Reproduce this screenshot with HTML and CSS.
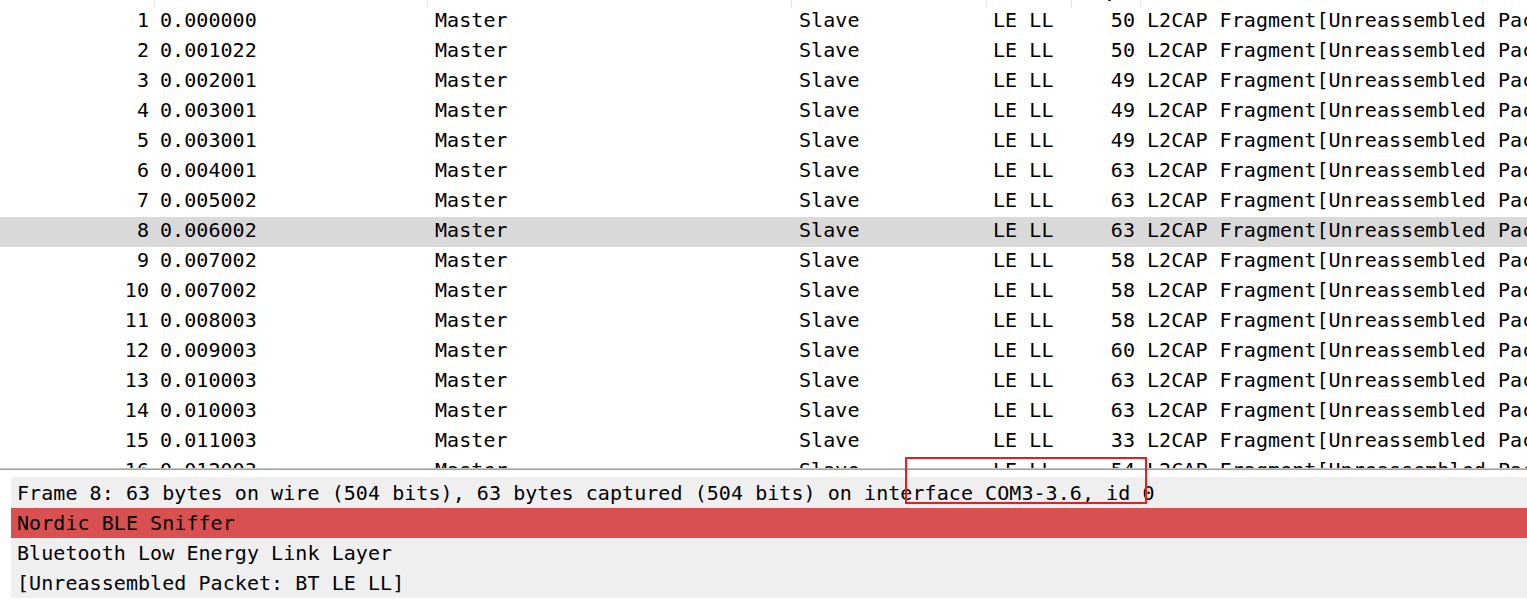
FILE: index.html
```html
<!DOCTYPE html>
<html>
<head>
<meta charset="utf-8">
<link rel="stylesheet" href="styles.css">
</head>
<body>
<div class="app">
  <div class="list">
    <div class="hdr">
      <div class="hc"></div><div class="hc"></div><div class="hc"></div><div class="hc"></div><div class="hc"></div><div class="hc sorted"></div><div class="hc"></div>
    </div>
    <div class="row"><span class="c r">1</span><span class="c t">0.000000</span><span class="c s">Master</span><span class="c s">Slave</span><span class="c">LE LL</span><span class="c r">50</span><span class="c">L2CAP Fragment[Unreassembled Packet: BT LE LL]</span></div>
    <div class="row"><span class="c r">2</span><span class="c t">0.001022</span><span class="c s">Master</span><span class="c s">Slave</span><span class="c">LE LL</span><span class="c r">50</span><span class="c">L2CAP Fragment[Unreassembled Packet: BT LE LL]</span></div>
    <div class="row"><span class="c r">3</span><span class="c t">0.002001</span><span class="c s">Master</span><span class="c s">Slave</span><span class="c">LE LL</span><span class="c r">49</span><span class="c">L2CAP Fragment[Unreassembled Packet: BT LE LL]</span></div>
    <div class="row"><span class="c r">4</span><span class="c t">0.003001</span><span class="c s">Master</span><span class="c s">Slave</span><span class="c">LE LL</span><span class="c r">49</span><span class="c">L2CAP Fragment[Unreassembled Packet: BT LE LL]</span></div>
    <div class="row"><span class="c r">5</span><span class="c t">0.003001</span><span class="c s">Master</span><span class="c s">Slave</span><span class="c">LE LL</span><span class="c r">49</span><span class="c">L2CAP Fragment[Unreassembled Packet: BT LE LL]</span></div>
    <div class="row"><span class="c r">6</span><span class="c t">0.004001</span><span class="c s">Master</span><span class="c s">Slave</span><span class="c">LE LL</span><span class="c r">63</span><span class="c">L2CAP Fragment[Unreassembled Packet: BT LE LL]</span></div>
    <div class="row"><span class="c r">7</span><span class="c t">0.005002</span><span class="c s">Master</span><span class="c s">Slave</span><span class="c">LE LL</span><span class="c r">63</span><span class="c">L2CAP Fragment[Unreassembled Packet: BT LE LL]</span></div>
    <div class="row sel"><span class="c r">8</span><span class="c t">0.006002</span><span class="c s">Master</span><span class="c s">Slave</span><span class="c">LE LL</span><span class="c r">63</span><span class="c">L2CAP Fragment[Unreassembled Packet: BT LE LL]</span></div>
    <div class="row"><span class="c r">9</span><span class="c t">0.007002</span><span class="c s">Master</span><span class="c s">Slave</span><span class="c">LE LL</span><span class="c r">58</span><span class="c">L2CAP Fragment[Unreassembled Packet: BT LE LL]</span></div>
    <div class="row"><span class="c r">10</span><span class="c t">0.007002</span><span class="c s">Master</span><span class="c s">Slave</span><span class="c">LE LL</span><span class="c r">58</span><span class="c">L2CAP Fragment[Unreassembled Packet: BT LE LL]</span></div>
    <div class="row"><span class="c r">11</span><span class="c t">0.008003</span><span class="c s">Master</span><span class="c s">Slave</span><span class="c">LE LL</span><span class="c r">58</span><span class="c">L2CAP Fragment[Unreassembled Packet: BT LE LL]</span></div>
    <div class="row"><span class="c r">12</span><span class="c t">0.009003</span><span class="c s">Master</span><span class="c s">Slave</span><span class="c">LE LL</span><span class="c r">60</span><span class="c">L2CAP Fragment[Unreassembled Packet: BT LE LL]</span></div>
    <div class="row"><span class="c r">13</span><span class="c t">0.010003</span><span class="c s">Master</span><span class="c s">Slave</span><span class="c">LE LL</span><span class="c r">63</span><span class="c">L2CAP Fragment[Unreassembled Packet: BT LE LL]</span></div>
    <div class="row"><span class="c r">14</span><span class="c t">0.010003</span><span class="c s">Master</span><span class="c s">Slave</span><span class="c">LE LL</span><span class="c r">63</span><span class="c">L2CAP Fragment[Unreassembled Packet: BT LE LL]</span></div>
    <div class="row"><span class="c r">15</span><span class="c t">0.011003</span><span class="c s">Master</span><span class="c s">Slave</span><span class="c">LE LL</span><span class="c r">33</span><span class="c">L2CAP Fragment[Unreassembled Packet: BT LE LL]</span></div>
    <div class="row"><span class="c r">16</span><span class="c t">0.012003</span><span class="c s">Master</span><span class="c s">Slave</span><span class="c">LE LL</span><span class="c r">54</span><span class="c">L2CAP Fragment[Unreassembled Packet: BT LE LL]</span></div>
  </div>
  <div class="divider"></div>
  <div class="detail">
    <div class="drow">Frame 8: 63 bytes on wire (504 bits), 63 bytes captured (504 bits) on interface COM3-3.6, id 0</div>
    <div class="drow hl">Nordic BLE Sniffer</div>
    <div class="drow">Bluetooth Low Energy Link Layer</div>
    <div class="drow">[Unreassembled Packet: BT LE LL]</div>
  </div>
  <div class="mark"></div>
</div>
</body>
</html>
```

FILE: styles.css
```css
html, body {
  margin: 0;
  padding: 0;
  background: #ffffff;
}
.app {
  position: relative;
  width: 1527px;
  height: 616px;
  overflow: hidden;
  font-family: "DejaVu Sans Mono", "Liberation Mono", monospace;
  font-size: 20px;
  letter-spacing: 0.06px;
  color: #000000;
}
.list {
  height: 468px;
  overflow: hidden;
}
.hdr, .row {
  display: grid;
  grid-template-columns: 155px 273px 364px 195px 85px 69px 1fr;
}
.hdr {
  height: 7px;
}
.hc {
  border-right: 1px solid #e3e3e3;
  box-sizing: border-box;
  position: relative;
}
.hc:last-child {
  border-right: none;
}
.sorted::after {
  content: "";
  position: absolute;
  left: 36px;
  top: 0;
  width: 3px;
  height: 1px;
  background: #333;
}
.row {
  height: 30px;
  line-height: 27px;
  white-space: nowrap;
}
.row.sel {
  background: #d9d9d9;
}
.c {
  padding: 0 6px;
  overflow: hidden;
}
.c.r {
  text-align: right;
}
.c.t {
  padding-left: 5px;
}
.c.s {
  padding-left: 7px;
}
.divider {
  height: 1px;
  background: #c4c4c4;
  border-bottom: 1px solid #a0a0a0;
  margin-bottom: 7px;
}
.detail {
  margin-left: 11px;
  background: #efefef;
  padding-top: 1px;
}
.drow {
  height: 30px;
  line-height: 30px;
  padding-left: 6px;
  white-space: nowrap;
}
.drow.hl {
  background: #d95050;
}
.mark {
  position: absolute;
  left: 905px;
  top: 457px;
  width: 242px;
  height: 47px;
  box-sizing: border-box;
  border: 2px solid #e81c24;
}
```
